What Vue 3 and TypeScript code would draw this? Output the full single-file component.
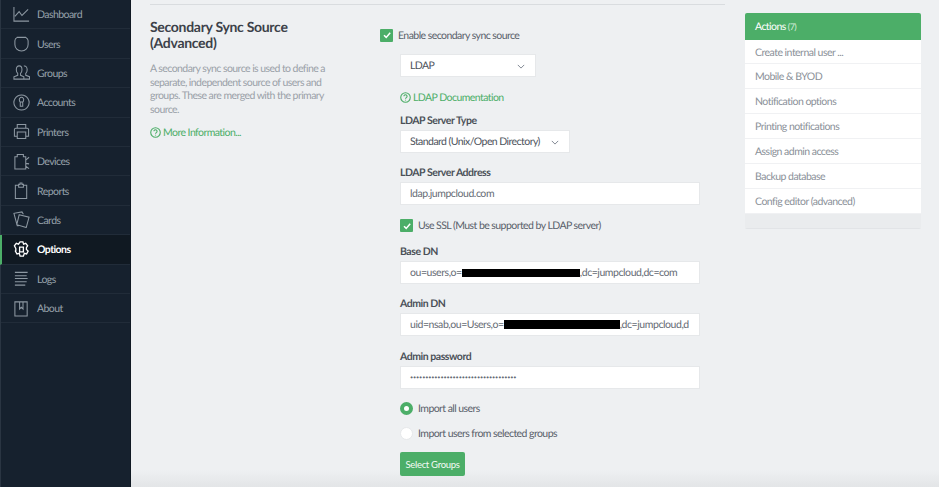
<script setup lang="ts">
interface NavItem { label: string; icon: string; active?: boolean }
const nav: NavItem[] = [
  { label: 'Dashboard', icon: 'M1 1v15h16M2 11l4.500-5 3 4L16 3.500' },
  { label: 'Users', icon: 'M4 2.500h9.500c1.500 1 2.500 2 2.500 3.500v4c0 4-3 7-7 7s-7-3-7-7V6c0-1.500 1-2.800 2.500-3.500z' },
  { label: 'Groups', icon: 'M1 16v-2.500l4-1.500v-2C4 9 3.500 8 3.500 6c0-2.500 1.200-4 3-4s3 1.500 3 4c0 2-.5 3-1.500 4v2l3.500 1.500V16zM11.500 2.200c2-.6 3.500 1.200 3.500 3.800 0 2-.5 3-1.500 4v2l4 1.500V16h-6' },
  { label: 'Accounts', icon: 'M9 1a8 8 0 1 0 .01 0zM6.800 6.500a2.300 2.300 0 1 1 4.400 0c0 1-.4 1.500-.9 2V13H7.700V8.500c-.5-.5-.9-1-.9-2zM7.800 8.500h2.400' },
  { label: 'Printers', icon: 'M4.500 5.500V1.500h9v4M4.500 14H1.500V7a1.500 1.500 0 0 1 1.500-1.500h12A1.500 1.500 0 0 1 16.500 7v7h-3M4.500 9.500h9v7h-9z' },
  { label: 'Devices', icon: 'M2 17V4h2.500V1.500H11V4h2.500v13zM13.500 7.500l3.500-3M13.500 11l3.500 .5M13.500 14l3.500 2.500' },
  { label: 'Reports', icon: 'M6 3.500H2.500v14h12v-14H11M6 5.500V2.500h1.500V1h2v1.500H11v3z' },
  { label: 'Cards', icon: 'M6 15.500H4.500L1 2.500l8.500-1.500 1.500 2.500M6.500 4l10.500 2.500-3 11-10-3z' },
  { label: 'Options', icon: 'M7.500 1h3l.7 2.400 2.300-.9 2 2.500-1.300 2v2l1.800 1.700-1.600 3-2.400-.6-1 2.900h-3.500l-.8-2.900-2.500.6-1.700-3L3 10V8L1.500 5l2-2.500 2.300.9zM7 6.500h4v5H7z', active: true },
  { label: 'Logs', icon: 'M2 2.500h13.500M2 6h12.500M2 9h13.500M2 12.500h12.500M2 16h11' },
  { label: 'About', icon: 'M2 2h13v15H2zM7 2v7.500l1.800-1.800L10.600 9.500V2' },
]
const actions: string[] = [
  'Create internal user ...',
  'Mobile & BYOD',
  'Notification options',
  'Printing notifications',
  'Assign admin access',
  'Backup database',
  'Config editor (advanced)',
]
const dots: string = '•'.repeat(35)
</script>

<template>
  <div class="page">
    <aside class="sidebar">
      <div v-for="item in nav" :key="item.label" class="nav-row" :class="{ active: item.active }">
        <svg class="nav-icon" viewBox="0 0 18 18" width="17" height="17" aria-hidden="true">
          <path :d="item.icon" />
        </svg>
        <span class="nav-text">{{ item.label }}</span>
      </div>
    </aside>

    <main class="content">
      <section class="form-area">
        <div class="intro">
          <h2>Secondary Sync Source (Advanced)</h2>
          <p>A secondary sync source is used to define a separate, independent source of users and groups. These are merged with the primary source.</p>
          <a class="link more">
            <svg class="help" viewBox="0 0 12 12" width="11" height="11" aria-hidden="true">
              <circle cx="6" cy="6" r="5.200" />
              <path d="M4.300 4.700a1.700 1.700 0 1 1 2.600 1.400c-.6.400-.9.700-.9 1.300M6 8.400v1" />
            </svg>More Information...
          </a>
        </div>

        <div class="fields">
          <label class="check first">
            <span class="box"><svg viewBox="0 0 12 12" width="12" height="12"><path d="M3 6.200l2.200 2.200L9.200 3.800" /></svg></span>
            <span>Enable secondary sync source</span>
          </label>

          <div class="indented">
            <div class="control select sel-main">LDAP<svg class="chev" viewBox="0 0 10 6" width="8" height="5"><path d="M1 1l4 4 4-4" /></svg></div>
            <a class="link doc">
              <svg class="help" viewBox="0 0 12 12" width="11" height="11" aria-hidden="true">
                <circle cx="6" cy="6" r="5.200" />
                <path d="M4.300 4.700a1.700 1.700 0 1 1 2.600 1.400c-.6.400-.9.700-.9 1.300M6 8.400v1" />
              </svg>LDAP Documentation
            </a>
            <div class="label type-label">LDAP Server Type</div>
            <div class="control select sel-type">Standard (Unix/Open Directory)<svg class="chev" viewBox="0 0 10 6" width="8" height="5"><path d="M1 1l4 4 4-4" /></svg></div>
            <div class="label">LDAP Server Address</div>
            <div class="control">ldap.jumpcloud.com</div>

            <label class="check ssl">
              <span class="box"><svg viewBox="0 0 12 12" width="12" height="12"><path d="M3 6.200l2.200 2.200L9.200 3.800" /></svg></span>
              <span>Use SSL (Must be supported by LDAP server)</span>
            </label>

            <div class="label">Base DN</div>
            <div class="control">ou=users,o=<i class="redact r1"></i>,dc=jumpcloud,dc=com</div>
            <div class="label">Admin DN</div>
            <div class="control"><span class="clip">uid=nsab,ou=Users,o=<i class="redact r2"></i>,dc=jumpcloud,dc=com</span></div>
            <div class="label pwd-label">Admin password</div>
            <div class="control pwd">{{ dots }}</div>

            <label class="check radio-row r-first"><span class="radio on"></span><span>Import all users</span></label>
            <label class="check radio-row r-second"><span class="radio"></span><span>Import users from selected groups</span></label>
            <button class="btn" type="button">Select Groups</button>
          </div>
        </div>
      </section>

      <aside class="panel">
        <div class="panel-head">Actions <small>(7)</small></div>
        <div v-for="a in actions" :key="a" class="panel-row">{{ a }}</div>
        <div class="panel-foot"></div>
      </aside>
    </main>
  </div>
</template>

<style>
html, body { margin: 0; padding: 0; overflow: hidden; }
</style>

<style scoped>
.page {
  display: flex;
  width: 939px;
  height: 487px;
  overflow: hidden;
  font-family: "Lato", "Noto Sans", sans-serif;
  font-size: 10.500px;
  letter-spacing: -0.560px;
  text-rendering: geometricPrecision;
  color: #59606a;
  background: #eef0f2;
}
.sidebar {
  flex: 0 0 131px;
  box-sizing: border-box;
  background: #16212e;
  border-left: 1px solid #2a3542;
  border-right: 1px solid #101923;
}
.nav-row {
  display: flex;
  align-items: center;
  gap: 7px;
  box-sizing: border-box;
  height: 29.400px;
  padding-left: 12px;
  border-bottom: 1px solid #212c39;
  color: #97a1ab;
}
.nav-text { padding-top: 2px; }
.nav-row.active {
  margin-left: -1px;
  padding-left: 11px;
  border-left: 2px solid #4cae68;
  background: #101922;
  color: #ffffff;
  font-weight: 700;
}
.nav-icon { flex: none; fill: none; stroke: #8d98a2; stroke-width: 1.100; }
.active .nav-icon { stroke: #fff; stroke-width: 1.400; }

.content {
  flex: 1;
  display: flex;
  align-items: flex-start;
  gap: 20px;
  padding: 0 18px 0 19px;
  background: linear-gradient(#eef0f2 0, #eef0f2 470px, #e3e5e7 487px);
}
.form-area {
  flex: 0 0 575px;
  display: flex;
  margin-top: 4px;
  border-top: 1px solid #d9dcdf;
}
.intro { flex: 0 0 230px; padding-top: 14px; }
.intro h2 {
  margin: 0;
  width: 170px;
  font-size: 14px;
  line-height: 16px;
  letter-spacing: -0.300px;
  font-weight: 700;
  color: #3c4149;
}
.intro p {
  margin: 12px 0 0;
  width: 180px;
  line-height: 13.700px;
  color: #9aa0a8;
}
.link { display: flex; align-items: center; gap: 2px; color: #4cae68; }
.more { margin-top: 9px; }
.help { fill: none; stroke: #4cae68; stroke-width: 1.200; flex: none; }
.fields { flex: 1; padding-top: 23px; }
.check { display: flex; align-items: center; gap: 5px; color: #59606a; }
.check > span:last-child { padding-top: 1px; }
.first { height: 14px; }
.box {
  flex: none;
  width: 13px;
  height: 13px;
  border-radius: 1px;
  background: #4cae68;
  display: flex;
  align-items: center;
  justify-content: center;
}
.box svg { fill: none; stroke: #fff; stroke-width: 1.500; }
.indented { margin: 12px 0 0 20px; width: 300px; }
.control {
  box-sizing: border-box;
  height: 23px;
  line-height: 23px;
  padding: 0 9px;
  background: #fff;
  border: 1px solid #e6e8ea;
  white-space: nowrap;
  overflow: hidden;
  letter-spacing: -0.440px;
  color: #666c75;
}
.select {
  display: flex;
  align-items: center;
  justify-content: space-between;
  padding: 1px 10px 0 9px;
  letter-spacing: -0.560px;
  color: #4d535c;
}
.sel-main { width: 136px; }
.sel-type { width: 170px; }
.chev { fill: none; stroke: #7d8590; stroke-width: 1.200; flex: none; }
.doc { margin-top: 14px; height: 13px; }
.label { margin: 13px 0 5px; height: 11px; line-height: 14px; font-weight: 700; letter-spacing: -0.460px; color: #4b5058; }
.type-label { margin-top: 10px; }
.pwd-label { margin-top: 14px; }
.ssl { margin-top: 14px; height: 13px; }
.redact {
  display: inline-block;
  background: #000;
  height: 8px;
  vertical-align: -0.500px;
}
.r1 { width: 118px; }
.r2 { width: 116px; height: 9px; }
.clip { display: block; width: 279px; overflow: hidden; }
.pwd { font-size: 5.500px; letter-spacing: -0.150px; }
.radio {
  flex: none;
  box-sizing: border-box;
  width: 13px;
  height: 13px;
  border-radius: 50%;
  background: #fff;
  border: 1px solid #e6e8ea;
}
.radio.on { border: 4px solid #4cae68; }
.r-first { margin-top: 13px; height: 13px; }
.r-second { margin-top: 12px; height: 13px; }
.btn {
  display: block;
  width: 65px;
  height: 24px;
  margin-top: 12px;
  padding: 0;
  border: 0;
  border-radius: 2px;
  background: #4cae68;
  color: #f4fbf6;
  font: 400 9.500px "Lato", "Noto Sans", sans-serif;
  letter-spacing: -0.300px;
}
.panel { flex: 0 0 176px; margin-top: 13px; border-radius: 2px; overflow: hidden; }
.panel-head {
  height: 26.500px;
  line-height: 27px;
  padding-left: 10px;
  background: #4cae68;
  color: #fff;
}
.panel-head small { font-size: 9px; color: #d8f0df; }
.panel-row {
  box-sizing: border-box;
  height: 24.900px;
  line-height: 26px;
  padding-left: 10px;
  background: #fff;
  border-bottom: 1px solid #f0f1f3;
  letter-spacing: -0.520px;
  color: #8b9199;
}
.panel-foot { height: 14px; background: #eaecee; border-bottom: 1px solid #e2e4e7; }
</style>
